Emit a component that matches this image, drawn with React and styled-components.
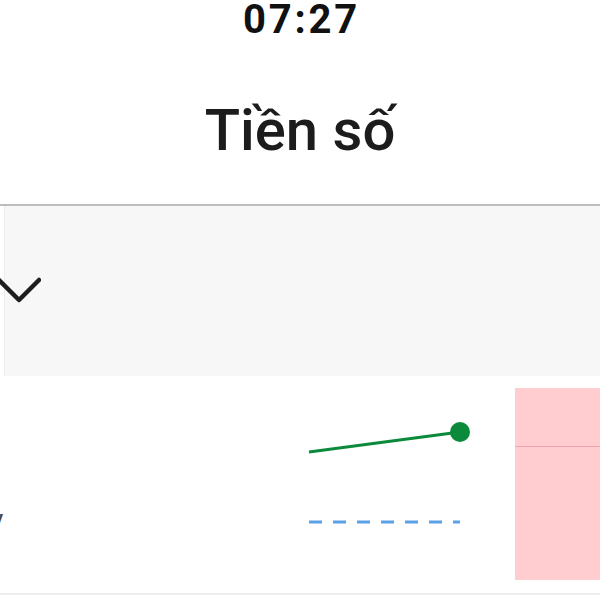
import React from "react";
import styled, { createGlobalStyle } from "styled-components";

const Global = createGlobalStyle`
  html, body { margin: 0; padding: 0; background: #fff; }
  body { font-family: Roboto, "Noto Sans", sans-serif; overflow: hidden; }
  * { box-sizing: border-box; }
`;

const Screen = styled.div`
  width: 600px;
  height: 600px;
  overflow: hidden;
  display: flex;
  flex-direction: column;
  background: #fff;
`;

const StatusBar = styled.div`
  height: 40px;
  display: flex;
  justify-content: center;
  padding-left: 3px;
  font-size: 40px;
  line-height: 40px;
  font-weight: 700;
  color: #111;
  letter-spacing: 2.75px;
`;

const Header = styled.header`
  padding: 61px 0 45px;
  display: flex;
  justify-content: center;
  border-bottom: 2px solid #bdbdbd;
`;

const Title = styled.h1`
  margin: 0;
  font-size: 58px;
  line-height: 58px;
  font-weight: 500;
  color: #1c1c1c;
`;

const Accordion = styled.div`
  height: 170px;
  background: #f7f7f7;
  border-left: 1px solid #ececec;
  margin-left: 4px;
  display: flex;
  align-items: center;
`;

const Chevron = styled.svg`
  width: 44px;
  height: 30px;
  margin-left: -8px;
  margin-top: -2px;
  flex: none;
`;

const Row = styled.div`
  height: 219px;
  padding: 12px 0 13px;
  display: flex;
  border-bottom: 2px solid #ededed;
`;

const LabelCell = styled.div`
  flex: 1;
  display: flex;
  align-items: flex-end;
  padding-bottom: 45px;
  overflow: hidden;
`;

const Label = styled.span`
  font-size: 30px;
  color: #4a4a4a;
  margin-left: -11px;
  line-height: 30px;
`;

const ChartCell = styled.svg`
  width: 215px;
  height: 192px;
  flex: none;
`;

const RangeBox = styled.div`
  width: 85px;
  height: 192px;
  flex: none;
  background: #ffcdd0;
  padding-top: 58px;
`;

const RangeLine = styled.div`
  height: 1px;
  background: #f3a3ab;
`;

export default function App() {
  return (
    <>
      <Global />
      <Screen>
        <StatusBar>07:27</StatusBar>
        <Header>
          <Title>Tiền số</Title>
        </Header>
        <Accordion>
          <Chevron viewBox="0 0 44 30">
            <path d="M2 5 L22 25 L42 5" fill="none" stroke="#1e1e1e" strokeWidth="4.5" strokeLinecap="round" strokeLinejoin="round" />
          </Chevron>
        </Accordion>
        <Row>
          <LabelCell>
            <Label>v</Label>
          </LabelCell>
          <ChartCell viewBox="0 0 215 192">
            <line x1="9" y1="64" x2="160" y2="44" stroke="#0b8a3c" strokeWidth="3" />
            <circle cx="160" cy="44" r="10" fill="#0b8a3c" />
            <line x1="9" y1="134" x2="160" y2="134" stroke="#5b9fe6" strokeWidth="3" strokeDasharray="13 11" />
          </ChartCell>
          <RangeBox>
            <RangeLine />
          </RangeBox>
        </Row>
      </Screen>
    </>
  );
}
